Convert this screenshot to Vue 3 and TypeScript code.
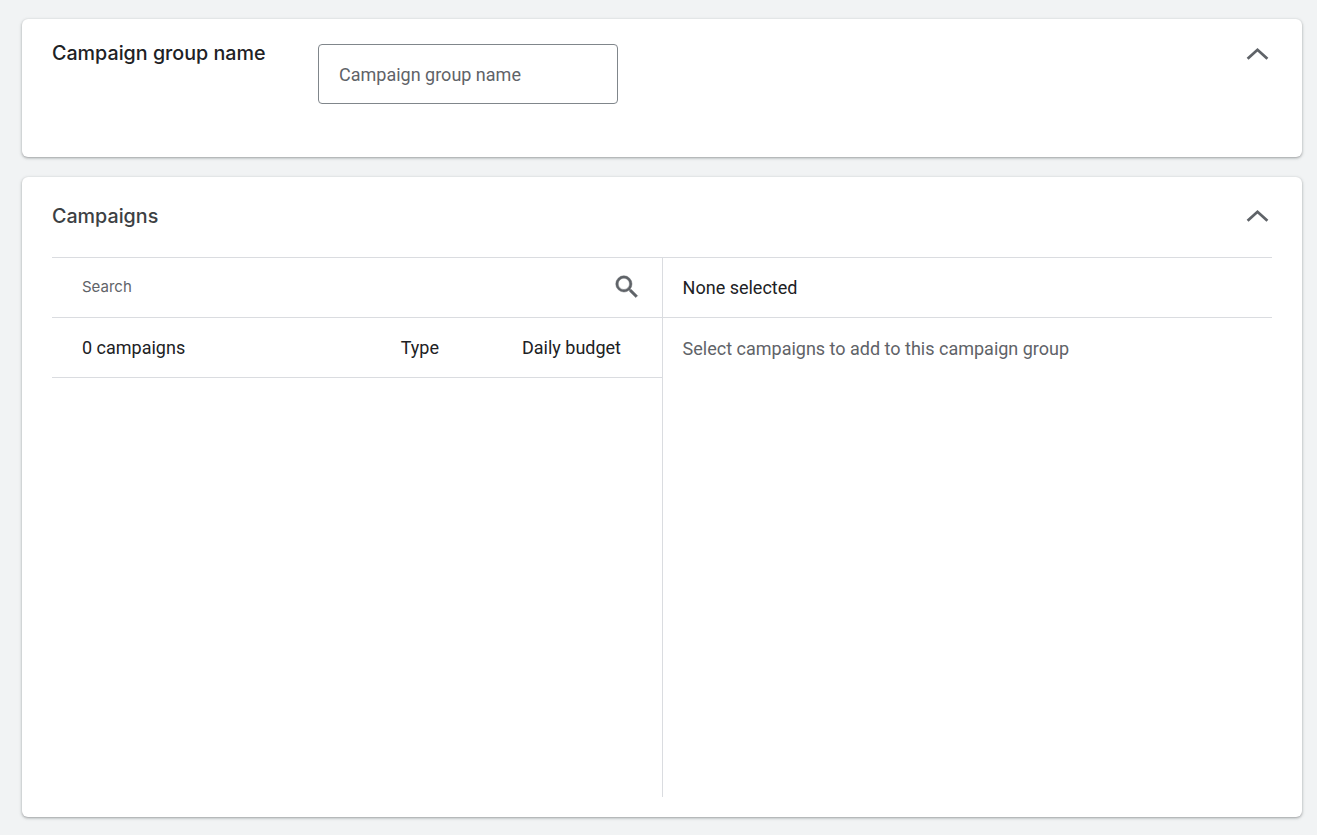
<script setup lang="ts">
const columns: { label: string; cls: string }[] = [
  { label: '0 campaigns', cls: 'col-name' },
  { label: 'Type', cls: 'col-type' },
  { label: 'Daily budget', cls: 'col-budget' },
]
</script>

<template>
  <main class="page">
    <section class="card card-name">
      <h2 class="title title-dark">Campaign group name</h2>
      <div class="field"><span class="placeholder">Campaign group name</span></div>
      <button class="chevron chevron-top" aria-label="Collapse">
        <svg width="24" height="24" viewBox="0 0 24 24"><path d="M2.6 15.8 12.5 6.8l9.9 9" fill="none" stroke="#5f6368" stroke-width="2.8"/></svg>
      </button>
    </section>

    <section class="card card-campaigns">
      <header class="head">
        <h2 class="title">Campaigns</h2>
        <button class="chevron" aria-label="Collapse">
          <svg width="24" height="24" viewBox="0 0 24 24"><path d="M2.6 15.8 12.5 6.8l9.9 9" fill="none" stroke="#5f6368" stroke-width="2.8"/></svg>
        </button>
      </header>
      <div class="picker">
        <div class="left">
          <div class="search">
            <span class="search-label">Search</span>
            <svg class="search-icon" width="30" height="30" viewBox="0 0 24 24"><path fill="#5f6368" stroke="#5f6368" stroke-width=".35" d="M15.5 14h-.79l-.28-.27A6.47 6.47 0 0 0 16 9.5 6.5 6.5 0 1 0 9.5 16c1.61 0 3.09-.59 4.23-1.57l.27.28v.79l5 4.99L20.49 19l-4.99-5zm-6 0C7.01 14 5 11.99 5 9.5S7.01 5 9.5 5 14 7.01 14 9.5 11.99 14 9.5 14z"/></svg>
          </div>
          <div class="table-head">
            <span v-for="c in columns" :key="c.label" :class="c.cls">{{ c.label }}</span>
          </div>
        </div>
        <div class="right">
          <div class="selected">None selected</div>
          <p class="hint">Select campaigns to add to this campaign group</p>
        </div>
      </div>
    </section>
  </main>
</template>

<style>
html, body { margin: 0; background: #f1f3f4; }
</style>

<style scoped>
.page {
  box-sizing: border-box;
  height: 835px;
  padding: 19px 15px 18px 22px;
  display: flex;
  flex-direction: column;
  gap: 20px;
  font-family: Roboto, "Liberation Sans", sans-serif;
}
.card {
  background: #fff;
  border-radius: 6px;
  box-shadow: 0 1px 2px rgba(60, 64, 67, .3), 0 1px 3px 1px rgba(60, 64, 67, .15);
}
.card-name {
  position: relative;
  height: 138px;
  display: flex;
  align-items: flex-start;
  padding: 0 30px;
  flex: none;
}
.card-campaigns {
  flex: 1;
  display: flex;
  flex-direction: column;
  padding: 0 30px 20px;
  min-height: 0;
}
.title {
  margin: 0 0 2px;
  font-family: Inter, sans-serif;
  font-size: 19.7px;
  font-weight: 500;
  color: #3c4043;
  line-height: 24px;
}
.title-dark {
  color: #202124;
  margin-top: 22px;
  width: 266px;
  flex: none;
}
.field {
  box-sizing: border-box;
  margin-top: 25px;
  width: 300px;
  height: 60px;
  border: 1px solid #80868b;
  border-radius: 4px;
  padding: 0 20px;
  display: flex;
  align-items: center;
}
.placeholder { font-size: 18px; color: #5f6368; }
.chevron {
  border: 0;
  background: none;
  padding: 0;
  width: 24px;
  height: 24px;
  display: block;
}
.chevron-top { position: absolute; right: 33px; top: 24px; }
.head {
  height: 80px;
  flex: none;
  display: flex;
  align-items: center;
  justify-content: space-between;
  padding-right: 3px;
}
.picker {
  flex: 1;
  display: flex;
  border-top: 1px solid #dadce0;
  min-height: 0;
}
.left {
  width: 610px;
  flex: none;
  border-right: 1px solid #dadce0;
}
.right { flex: 1; min-width: 0; }
.search {
  box-sizing: border-box;
  height: 60px;
  border-bottom: 1px solid #dadce0;
  display: flex;
  align-items: center;
  justify-content: space-between;
  padding: 0 20px 2px 30px;
}
.search-label {
  font-family: Inter, sans-serif;
  font-size: 15px;
  color: #5f6368;
}
.table-head {
  box-sizing: border-box;
  height: 60px;
  border-bottom: 1px solid #dadce0;
  display: flex;
  align-items: center;
  padding: 0 41px 0 30px;
  font-size: 18px;
  color: #202124;
}
.col-name { flex: 1; }
.col-type { margin-right: 83px; }
.selected {
  box-sizing: border-box;
  height: 60px;
  border-bottom: 1px solid #dadce0;
  display: flex;
  align-items: center;
  padding-left: 19.6px;
  font-size: 18px;
  color: #202124;
}
.hint {
  margin: 20px 0 0 19.6px;
  font-size: 18px;
  line-height: 22px;
  color: #5f6368;
}
</style>
